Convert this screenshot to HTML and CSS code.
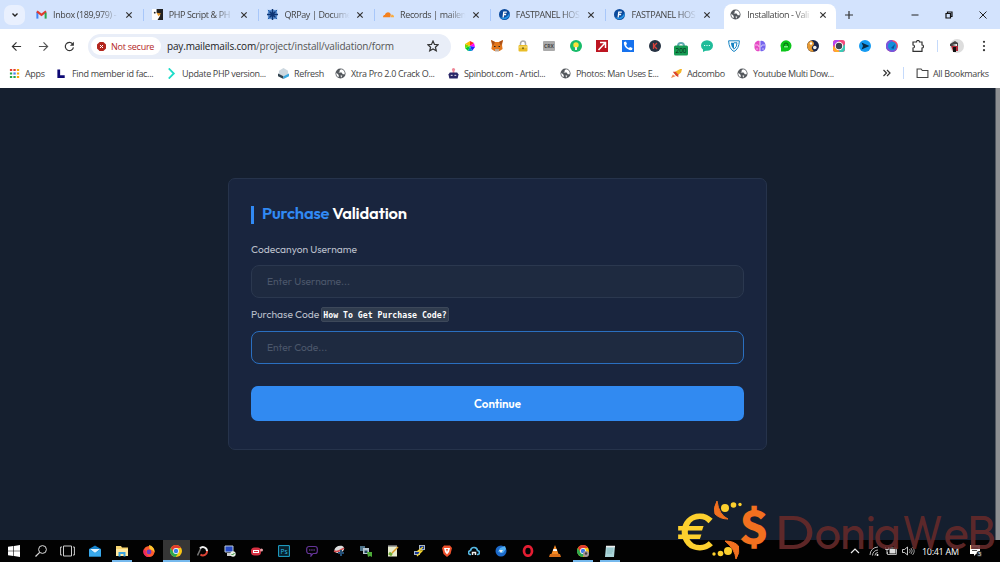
FILE: index.html
```html
<!DOCTYPE html>
<html lang="en">
<head>
    <meta charset="UTF-8">
    <meta name="viewport" content="width=device-width, initial-scale=1.0">
    <title>Installation - Validation</title>
    <link rel="stylesheet" href="styles.css">
</head>
<body>
    <!-- Shared icons -->
    <svg class="defs" width="0" height="0">
        <symbol id="close" viewBox="0 0 8 8"><path d="M1.3 1.3l5.4 5.4M6.7 1.3L1.3 6.7" stroke="#333" stroke-width="1.2"/></symbol>
        <symbol id="globe" viewBox="0 0 12 12"><circle cx="6" cy="6" r="5.5" fill="#54585d"/><path d="M1.6 5.2L4 7.6v2.6C2 9.4 1 7.500 1.600 5.200zM6.500 1.400L5 2.800v1.400L3.700 5h3.500l1.300 1.700H10.600C11 4 9.500 1.800 6.500 1.400zM6 8.300h2l-1.300 2.200z" fill="#fff"/></symbol>
        <symbol id="fast" viewBox="0 0 12 12"><circle cx="6" cy="6" r="6" fill="#0b4a9c"/><path d="M1 9A6 6 0 0 0 11.500 4Q8 11 1 9z" fill="#2393e6"/><path d="M4.500 9.300L5.200 3.300H8.500M4.800 6h3" fill="none" stroke="#fff" stroke-width="1.400"/></symbol>
        <symbol id="chrome" viewBox="0 0 12 12"><circle cx="6" cy="6" r="6" fill="#f9c513"/><path d="M.8 3A6 6 0 0 1 11.200 3H6L3.500 7.500z" fill="#e33b2e"/><path d="M.8 3A6 6 0 0 0 5.600 12L8.500 7.400 3.500 7.500z" fill="#2da94f"/><circle cx="6" cy="6" r="2.900" fill="#fff"/><circle cx="6" cy="6" r="2.200" fill="#3b7de8"/></symbol>
    </svg>

    <!-- Tab strip -->
    <div class="tabs">
        <div class="tab-search"><svg width="8" height="6" viewBox="0 0 8 6"><path d="M1.500 1.500L4 4l2.500-2.500" fill="none" stroke="#222" stroke-width="1.400"/></svg></div>
        <div class="tab">
            <svg class="fav" viewBox="0 0 12 12"><path d="M1.500 10.500V3" stroke="#4285f4" stroke-width="2.200"/><path d="M1 2.500l5 4 5-4" fill="none" stroke="#e33b2e" stroke-width="2.400"/><path d="M10.500 4v6.500" stroke="#2da94f" stroke-width="2.200"/></svg>
            <span class="tab-title">Inbox (189,979) -</span>
            <svg class="x"><use href="#close"/></svg>
        </div>
        <div class="tab">
            <svg class="fav" viewBox="0 0 12 12"><path fill="#fff" d="M0 0h12v12H0z"/><path d="M5 0h7v12H6L9 7 5 4z" fill="#222"/><path d="M5 4l5 1-3 3z" fill="#e99a2d"/><circle cx="3" cy="4" r="1" fill="#222"/></svg>
            <span class="tab-title">PHP Script &amp; PH</span>
            <svg class="x"><use href="#close"/></svg>
        </div>
        <div class="tab">
            <svg class="fav" viewBox="0 0 12 12"><path fill="#5b8fd0" d="M1 1h10v10H1z"/><path d="M6 0v12M0 6h12M3 3l6 6M9 3L3 9" stroke="#0d3474" stroke-width="1.600"/><path d="M1 1l2 2M11 1L9 3M1 11l2-2M11 11L9 9" stroke="#1c56a5"/></svg>
            <span class="tab-title">QRPay | Docume</span>
            <svg class="x"><use href="#close"/></svg>
        </div>
        <div class="tab">
            <svg class="fav" viewBox="0 0 12 12"><path d="M0 9c0-2 1-2.500 2-2.500C3 3 7.500 2.500 8.500 6L8 9z" fill="#f4811f"/><path d="M8.500 9l.7-3c2 0 2.800 1 2.800 3z" fill="#faad3f"/></svg>
            <span class="tab-title">Records | mailen</span>
            <svg class="x"><use href="#close"/></svg>
        </div>
        <div class="tab">
            <svg class="fav"><use href="#fast"/></svg>
            <span class="tab-title">FASTPANEL HOS</span>
            <svg class="x"><use href="#close"/></svg>
        </div>
        <div class="tab tab-last">
            <svg class="fav"><use href="#fast"/></svg>
            <span class="tab-title">FASTPANEL HOS</span>
            <svg class="x"><use href="#close"/></svg>
        </div>
        <div class="tab active">
            <svg class="fav"><use href="#globe"/></svg>
            <span class="tab-title">Installation - Vali</span>
            <svg class="x"><use href="#close"/></svg>
        </div>
        <svg class="new-tab" viewBox="0 0 8 8"><path d="M4 0v8M0 4h8" stroke="#333" stroke-width="1.200"/></svg>
        <div class="window-buttons">
            <svg viewBox="0 0 8 8"><path d="M.5 4h7" stroke="#222"/></svg>
            <svg viewBox="0 0 8 8"><path d="M1 2.500h4.500V7H1zM2.500 2.500V1H7v4.500H5.500" fill="none" stroke="#111" stroke-width="1.200"/></svg>
            <svg viewBox="0 0 8 8"><path d="M.5.5l7 7M7.500.5l-7 7" stroke="#222"/></svg>
        </div>
    </div>

    <!-- Toolbar -->
    <div class="toolbar">
        <div class="nav">
            <svg viewBox="0 0 12 12"><path d="M11 6H2M6 1.500L1.500 6 6 10.500" fill="none" stroke="#333" stroke-width="1.300"/></svg>
            <svg viewBox="0 0 12 12"><path d="M1 6h9M6 1.500L10.500 6 6 10.500" fill="none" stroke="#555" stroke-width="1.300"/></svg>
            <svg viewBox="0 0 12 12"><path d="M10.300 7A4.500 4.500 0 1 1 9.300 3" fill="none" stroke="#333" stroke-width="1.300"/><path d="M10.800.8v4.300H6.500z" fill="#333"/></svg>
        </div>
        <div class="omnibox">
            <div class="chip">
                <svg width="9" height="9" viewBox="0 0 9 9"><path d="M2.600 0h3.800L9 2.600v3.800L6.400 9H2.600L0 6.400V2.600z" fill="#b3261e"/><path d="M3 3l3 3M6 3L3 6" stroke="#fff"/></svg>
                <span>Not secure</span>
            </div>
            <span class="url"><b>pay.mailemails.com</b>/project/install/validation/form</span>
            <svg class="star" viewBox="0 0 12 12"><path d="M6 1l1.500 3.400 3.700.3-2.800 2.500.9 3.600L6 8.900l-3.300 1.900.9-3.600L.8 4.700l3.700-.3z" fill="none" stroke="#333" stroke-width="1.200"/></svg>
        </div>
        <div class="extensions">
            <svg viewBox="0 0 12 12"><path fill="#f22" d="M6 6V1l4 2z"/><path fill="#f0f" d="M6 6l4-3 1 4z"/><path fill="#22f" d="M6 6l5 1-3 4z"/><path fill="#09c" d="M6 6l2 5H4z"/><path fill="#0c3" d="M6 6l-2 5-3-3z"/><path fill="#7d0" d="M6 6L1 8V4z"/><path fill="#fb0" d="M6 6L1 4l5-3z"/></svg>
            <svg viewBox="0 0 12 12"><path d="M0 0l4 2h4l4-2-1 5 .6 4-3 2H3.400l-3-2L1 5z" fill="#e2761b"/><path d="M0 0l4 2-2 4zM12 0L8 2l2 4z" fill="#a9501a"/><path d="M4 9h4v2.500H4z" fill="#c0ad9e"/><path d="M3 6h1.500v1H3zM7.500 6H9v1H7.500z" fill="#222"/></svg>
            <svg viewBox="0 0 12 12"><path d="M3.500 6V3.500a2.500 2.500 0 0 1 5 0V6" fill="none" stroke="#aaa" stroke-width="1.500"/><rect x="1.500" y="5" width="9" height="6.500" rx="1" fill="#e9bd28"/><path d="M2 7h8" stroke="#f9e58b"/><circle cx="6" cy="8.300" r="1" fill="#7a6414"/></svg>
            <svg viewBox="0 0 12 12"><rect y="1" width="12" height="10" rx="1" fill="#aaa"/><text x="6" y="8" font-size="5" font-weight="bold" text-anchor="middle" fill="#444">CRX</text></svg>
            <svg viewBox="0 0 12 12"><circle cx="6" cy="6" r="6" fill="#18bb69"/><circle cx="6" cy="5" r="2.700" fill="#ffe03b"/><path d="M5 7h2v3H5z" fill="#eee"/></svg>
            <svg viewBox="0 0 12 12"><path fill="#bd1521" d="M0 0h12v12H0z"/><path d="M2.500 10L9 3M4 2.500h5.500V8" fill="none" stroke="#fff" stroke-width="1.500"/></svg>
            <svg viewBox="0 0 12 12"><path fill="#1672ee" d="M0 0h12v12H0z"/><path d="M2 2l2-.5L5 4 4 5c.5 1.500 1.500 2.500 3 3l1-1 2.500 1L10 10C6 11 1 6 2 2z" fill="#fff"/></svg>
            <svg viewBox="0 0 12 12"><circle cx="6" cy="6" r="6" fill="#263343"/><path d="M4.500 3v6M8 3L5 6l3 3" fill="none" stroke="#d8423c" stroke-width="1.300"/></svg>
            <svg class="badged" viewBox="0 0 16 16"><path d="M5 6a3 3 0 0 1 6 0" fill="none" stroke="#5faab0" stroke-width="2"/><rect x="1" y="5.500" width="14" height="10" rx="1.500" fill="#169b54"/><text x="8" y="13" font-size="6.500" text-anchor="middle" fill="#062b15">200</text></svg>
            <svg viewBox="0 0 12 12"><ellipse cx="6" cy="5.500" rx="6" ry="5.300" fill="#20bc9a"/><path d="M2 8v4l4-2z" fill="#20bc9a"/><path d="M3 5.500h6" stroke="#d7fff4" stroke-dasharray="1.200"/></svg>
            <svg viewBox="0 0 12 12"><path d="M.6.800h10.800Q11 9 6 11.500 1 9 .6.800z" fill="#fff" stroke="#1683c2"/><path d="M3 2.800h3v6.500Q3 7 3 2.800z" fill="#1683c2"/><path d="M6 2.800h3Q9 7 6 9.300" fill="none" stroke="#1683c2"/></svg>
            <svg viewBox="0 0 12 12"><path d="M5.600 1v10C3 12 0 10 .5 6 0 3 3 0 5.600 1z" fill="#e64bc5"/><path d="M6.400 1v10C9 12 12 10 11.500 6 12 3 9 0 6.400 1z" fill="#7765ee"/><path d="M1 5h3l1 2M11 5H8L7 7M3 8v2M9 8v2" fill="none" stroke="#fff" stroke-width=".6"/></svg>
            <svg viewBox="0 0 12 12"><circle cx="6" cy="5.800" r="5.500" fill="#0cc51b"/><path d="M1 7v4.500h5z" fill="#0cc51b"/><path d="M4 7.500V5.200a2 2 0 0 1 4 0v2.300" fill="none" stroke="#087713" stroke-width="1.200"/><path d="M4 6h4v1.500H4z" fill="#7be884"/></svg>
            <svg viewBox="0 0 12 12"><circle cx="6" cy="6" r="6" fill="#192548"/><path d="M3 1a3 3 0 0 1 4 3c0 2-3 2-2 5l2 2.500A5.700 5.700 0 0 1 3 1z" fill="#e79a33"/><circle cx="7.800" cy="7.500" r="1.800" fill="#eee"/><circle cx="4" cy="3.500" r="1.200" fill="#fff"/></svg>
            <svg viewBox="0 0 12 12"><rect width="12" height="12" rx="2.500" fill="#f34b7d"/><path d="M0 6V2L2 0h5z" fill="#b447f2"/><path d="M5 12h5l2-2V4z" fill="#3dc9b5"/><path d="M0 6v4l2 2h5z" fill="#ffad27"/><circle cx="6" cy="6" r="4.200" fill="#fff"/><circle cx="6" cy="6" r="3.200" fill="#3c4652"/></svg>
            <svg viewBox="0 0 12 12"><circle cx="6" cy="6" r="6" fill="#159bf2"/><path d="M2.500 2.500L10.500 6l-8 3.500L4 6z" fill="#082b45"/></svg>
            <svg viewBox="0 0 12 12"><circle cx="6" cy="6" r="6" fill="#ef496c"/><path d="M6 0a6 6 0 1 0 5 9z" fill="#7957dc"/><circle cx="6.300" cy="6" r="4.300" fill="#148fd9"/><path d="M5 8l4-4-1.500 5z" fill="#0b4d9b"/></svg>
            <svg viewBox="0 0 12 12"><path d="M1 2h3.500a1.500 1.500 0 0 1 3 0H10v3a1.500 1.500 0 0 1 0 3v3.300H1V8a1.500 1.500 0 0 0 0-3z" fill="none" stroke="#333" stroke-width="1.200"/></svg>
        </div>
        <i class="divider"></i>
        <svg class="avatar" viewBox="0 0 14 14"><circle cx="7" cy="7" r="7" fill="#ddd"/><path d="M0 5l5-3 3 2v3H0z" fill="#444"/><path d="M2 6l5-1v2z" fill="#fff"/><path d="M1 7h7v5H3z" fill="#b32836"/><path d="M3 8h3v5H3z" fill="#111"/></svg>
        <svg class="dots" viewBox="0 0 4 12"><circle cx="2" cy="1.800" r="1.100"/><circle cx="2" cy="6" r="1.100"/><circle cx="2" cy="10.200" r="1.100"/></svg>
    </div>

    <!-- Bookmarks -->
    <div class="bookmarks">
        <div class="bookmark bm-apps">
            <svg viewBox="0 0 12 12"><path d="M1 2.200h2.500M4.800 2.200h2.500" stroke="#e33b2e" stroke-width="2.400"/><path d="M8.600 2.200h2.500M8.600 6h2.500M8.600 9.800h2.500" stroke="#f6a80b" stroke-width="2.400"/><path d="M1 6h2.500M1 9.800h2.500M4.800 9.800h2.500" stroke="#27a34a" stroke-width="2.400"/><path d="M4.800 6h2.500" stroke="#4285f4" stroke-width="2.400"/></svg>
            <span>Apps</span>
        </div>
        <div class="bookmark bm-member">
            <svg viewBox="0 0 12 12"><path d="M3 1.500v8h6.500" fill="none" stroke="#0d0874" stroke-width="3"/></svg>
            <span>Find member id fac...</span>
        </div>
        <div class="bookmark bm-php">
            <svg viewBox="0 0 12 12"><path d="M3 .5L8.500 6 3 11.500" fill="none" stroke="#1ddcc8" stroke-width="2"/></svg>
            <span>Update PHP version...</span>
        </div>
        <div class="bookmark bm-refresh">
            <svg viewBox="0 0 12 12"><path d="M1 3l5-3 5 3v4L6 9 1 7z" fill="#ccd7df"/><path d="M0 6l6 3v3L0 9z" fill="#31424e"/><path d="M6 9l6-3v3l-6 3z" fill="#3aa7df"/></svg>
            <span>Refresh</span>
        </div>
        <div class="bookmark bm-xtra">
            <svg><use href="#globe"/></svg>
            <span>Xtra Pro 2.0 Crack O...</span>
        </div>
        <div class="bookmark bm-spin">
            <svg viewBox="0 0 12 12"><circle cx="6" cy="1.700" r="1.700" fill="#ef8998"/><path d="M5 2h2v4H5z" fill="#ef8998"/><path d="M2 5h8l1.500 2-1 4.500h-9L.5 7z" fill="#292667"/><path d="M3 8h2M7 8h2" stroke="#fff"/></svg>
            <span>Spinbot.com - Articl...</span>
        </div>
        <div class="bookmark bm-photos">
            <svg><use href="#globe"/></svg>
            <span>Photos: Man Uses E...</span>
        </div>
        <div class="bookmark bm-adcombo">
            <svg viewBox="0 0 12 12"><path d="M3 5L10 1l2 0-1 4-5 4z" fill="#f5b52a"/><path d="M2 4h3l3 3v3L5 8z" fill="#d94332"/><path d="M0 11l2-4 3 2z" fill="#f08b54"/></svg>
            <span>Adcombo</span>
        </div>
        <div class="bookmark bm-youtube">
            <svg><use href="#globe"/></svg>
            <span>Youtube Multi Dow...</span>
        </div>
        <svg class="more" viewBox="0 0 8 8"><path d="M1 1l3 3-3 3M4.500 1l3 3-3 3" fill="none" stroke="#333" stroke-width="1.200"/></svg>
        <i class="divider"></i>
        <div class="bookmark bm-all">
            <svg viewBox="0 0 12 12"><path d="M.6 2h4l1.200 1.500h5.600v7H.6z" fill="none" stroke="#444" stroke-width="1.100"/></svg>
            <span>All Bookmarks</span>
        </div>
    </div>

    <!-- Page -->
    <main class="page">
        <form class="card">
            <h3 class="title"><span>Purchase</span> Validation</h3>
            <label for="username">Codecanyon Username</label>
            <input type="text" id="username" placeholder="Enter Username...">
            <label for="code">Purchase Code <code>How To Get Purchase Code?</code></label>
            <input type="text" id="code" class="focused" placeholder="Enter Code...">
            <button type="submit">Continue</button>
        </form>
        <div class="scrollbar"></div>
    </main>

    <!-- Taskbar -->
    <div class="taskbar">
        <div class="task"><svg viewBox="0 0 12 12"><path d="M0 1.700L5.400 1v4.700H0zM6 .9L12 0v5.700H6zM0 6.300h5.400V11L0 10.300zM6 6.300h6V12l-6-.9z" fill="#fff"/></svg></div>
        <div class="task"><svg viewBox="0 0 12 12"><circle cx="7.500" cy="4.500" r="3.900" fill="none" stroke="#ddd"/><path d="M4.700 7.300L.5 11.500" stroke="#ddd" stroke-width="1.200"/></svg></div>
        <div class="task"><svg class="wide" viewBox="0 0 15 12"><path d="M3.500 1h8v10h-8zM2 2H.6v8H2M13 2h1.400v8H13" fill="none" stroke="#ccc"/></svg></div>
        <div class="task"><svg viewBox="0 0 12 12"><path d="M0 4l6-3.500L12 4v7.500H0z" fill="#1682cc"/><path d="M1 4h10L6 8z" fill="#dff3ff"/><path d="M0 4l6 4 6-4v7.500H0z" fill="#39a9ec"/></svg></div>
        <div class="task open"><svg viewBox="0 0 12 12"><path d="M0 1h5l1 1.500h6V11H0z" fill="#f6d471"/><path d="M0 4h12v7H0z" fill="#ffe9a0"/><path d="M2.500 11.500V7h7v4.500H7.500V9h-3v2.500z" fill="#39a2df"/></svg></div>
        <div class="task"><svg viewBox="0 0 12 12"><circle cx="6" cy="6.500" r="5.500" fill="#ff5c2e"/><path d="M6 0c4 1 6 4 5.500 8-1-3-3-3-5-4z" fill="#ffc52e"/><path d="M1 4a5.500 5.500 0 0 0 6 8C3 10 3 8 3 6z" fill="#f2285d"/><circle cx="6" cy="7" r="2.400" fill="#6b3dc8"/></svg></div>
        <div class="task open current"><svg><use href="#chrome"/></svg></div>
        <div class="task"><svg viewBox="0 0 12 12"><path d="M3 3.500A4 4 0 0 1 10 6" fill="none" stroke="#eee" stroke-width="2"/><path d="M10 6A4 4 0 0 1 3.500 9.500" fill="none" stroke="#db4335" stroke-width="2"/><path d="M.5 10.500L3.500 4" stroke="#777" stroke-width="1.500"/></svg></div>
        <div class="task"><svg viewBox="0 0 12 12"><path d="M1 1h8v6H1z" fill="#2549c5" stroke="#b9c9dd"/><path d="M3 8h5v3H3z" fill="#ccc"/><circle cx="9" cy="9" r="2.700" fill="#e8efe6"/><path d="M7.500 9l1 1 2-2" fill="none" stroke="#268b2c"/></svg></div>
        <div class="task"><svg viewBox="0 0 12 12"><rect y="2.500" width="10" height="8" rx="3.500" fill="#d73042"/><path d="M2 5h6v3H2z" fill="#fff"/><path d="M3 6.500h4" stroke="#d73042"/><circle cx="10.500" cy="5" r="1.500" fill="#e8a1a6"/></svg></div>
        <div class="task"><svg viewBox="0 0 12 12"><path d="M.6.600h10.800v10.800H.6z" fill="#06202c" stroke="#20a7cf"/><text x="6" y="8.500" font-size="6.500" text-anchor="middle" fill="#32bde6">Ps</text></svg></div>
        <div class="task"><svg viewBox="0 0 12 12"><path d="M3 1.500h6a2.300 2.300 0 0 1 2.300 2.300v2.400A2.300 2.300 0 0 1 9 8.500H7L5 11V8.500H3A2.300 2.300 0 0 1 .7 6.200V3.800A2.300 2.300 0 0 1 3 1.500z" fill="none" stroke="#643498" stroke-width="1.200"/><path d="M3 5h6" stroke="#784aae" stroke-dasharray="1.500 .7"/></svg></div>
        <div class="task"><svg viewBox="0 0 12 12"><ellipse cx="6.500" cy="4.500" rx="5" ry="3.500" fill="#ddd" transform="rotate(-20 6 5)"/><path d="M1 6c4 2 7-1 10-3" stroke="#d44d50" stroke-width="1.500" fill="none"/><path d="M8 5v6M5 8h6" stroke="#234e75" stroke-width="2"/></svg></div>
        <div class="task"><svg viewBox="0 0 12 12"><path d="M0 1h5v5H0z" fill="#4f738a"/><path d="M3 3h6v6H3z" fill="#b7c7d2"/><path d="M4.500 5.500h3V8h-3z" fill="#24435a"/><path d="M7 7l5 0 0 5-2-1-2 1z" fill="#4daa39"/></svg></div>
        <div class="task"><svg viewBox="0 0 12 12"><path d="M1 1h9v10.500H1z" fill="#e9edcf"/><path d="M1 1h9" stroke="#888" stroke-width="1.500"/><path d="M2 8l3 2" stroke="#70ac35" stroke-width="3"/><path d="M5 8l6-6" stroke="#dc9b25" stroke-width="1.500"/></svg></div>
        <div class="task"><svg viewBox="0 0 12 12"><path d="M5 0h6v5H5zM0 6h6v4H0z" fill="#a8b6c5"/><path d="M6 1h4v3H6zM1 7h4v2H1z" fill="#173798"/><path d="M9 2L4 6h4l-5 5" fill="none" stroke="#f4d530" stroke-width="1.300"/></svg></div>
        <div class="task"><svg viewBox="0 0 12 12"><path d="M3 .5h6L11 3 9.500 9 6 12 2.500 9 1 3z" fill="#ef512c"/><path d="M3 3h6L8 7 6 9.500 4 7z" fill="#fff"/><path d="M5 4h2L6 7z" fill="#ef512c"/></svg></div>
        <div class="task"><svg viewBox="0 0 12 12"><path d="M3 9.500H2C0 9 0 6 2.500 5.500 3.500 1 9 2 9.500 5.500 12 6 12 9 10 9.500H9" fill="none" stroke="#55b7e2" stroke-width="1.700"/><path d="M4.500 10V7.500h3V10" fill="none" stroke="#eee" stroke-width="1.500"/></svg></div>
        <div class="task"><svg viewBox="0 0 12 12"><circle cx="6" cy="6" r="5.500" fill="#1c69c9"/><path d="M5 3l5-2 1 3-3 4-5-1z" fill="#51aff4"/><path d="M4 5l4 0-2 3z" fill="#eee"/></svg></div>
        <div class="task"><svg viewBox="0 0 12 12"><ellipse cx="6" cy="6" rx="4" ry="4.700" fill="none" stroke="#e41d32" stroke-width="2.700"/></svg></div>
        <div class="task"><svg viewBox="0 0 12 12"><path d="M6 0l4 10H2z" fill="#f48a25"/><path d="M4.500 4h3l.7 2H3.800z" fill="#fff"/><path d="M1 9h10l1 3H0z" fill="#d96e18"/></svg></div>
        <div class="task open"><svg viewBox="0 0 12 12"><use href="#chrome"/><circle cx="9" cy="9" r="3" fill="#a99"/><circle cx="9" cy="8.500" r="1.200" fill="#444"/></svg></div>
        <div class="task open"><svg viewBox="0 0 12 12"><path d="M2 1h9l-1 11H1z" fill="#acd5d9"/><path d="M2 1.500h9" stroke="#eee" stroke-width="1.500"/><path d="M3 4h6M3 6h6M3 8h5" stroke="#72adb4" stroke-width=".6"/></svg></div>
        <div class="tray">
            <svg class="tray-up" viewBox="0 0 10 10"><path d="M1 7l4-4 4 4" fill="none" stroke="#eee" stroke-width="1.200"/></svg>
            <svg class="tray-wifi" viewBox="0 0 10 10"><path d="M1 9a8 8 0 0 1 8-8M3.500 9.500A5.500 5.500 0 0 1 9 4M6 9.500a3 3 0 0 1 3-3" fill="none" stroke="#bbb" stroke-width="1"/><circle cx="8.500" cy="9" r="1" fill="#fff"/></svg>
            <svg class="tray-battery" viewBox="0 0 12 10"><path d="M4.500 3h6v4.500h-6z" fill="#ddd"/><path d="M4 2h7.400v6.500H2.500V6M11.900 4v2.500" fill="none" stroke="#ddd" stroke-width=".8"/><path d="M.5 1v2.500h3V1M2 3.500V8" fill="none" stroke="#ccc"/></svg>
            <svg class="tray-volume" viewBox="0 0 13 10"><path d="M.5 3.500h2L5.500 1v8L2.500 6.500h-2z" fill="none" stroke="#ddd" stroke-width=".9"/><path d="M7.500 3q1.500 2 0 4M9 2q2.500 3 0 6M10.500 1q3.500 4 0 8" fill="none" stroke="#bbb" stroke-width=".8"/></svg>
            <span class="clock">10:41 AM</span>
            <svg class="tray-note" viewBox="0 0 12 12"><path d="M0 0h10v9H6l-2 2V9H0z" fill="#fff"/><path d="M2 3h6M2 5.500h5" stroke="#222" stroke-width=".8"/><circle cx="9.500" cy="9" r="3" fill="#222"/><text x="9.500" y="11.300" font-size="6" text-anchor="middle" fill="#fff">3</text></svg>
        </div>
    </div>

    <!-- Watermark over page and taskbar -->
    <svg class="watermark" viewBox="0 0 325 64">
        <text class="euro" x="2" y="52" textLength="38" lengthAdjust="spacingAndGlyphs">€</text>
        <text class="dollar" x="64" y="46" textLength="29" lengthAdjust="spacingAndGlyphs">$</text>
        <path d="M42 3Q38 10 40 16 45 21 53 21 44 17 42 3zM50 43Q59 43 63.500 48 65 55 61 61 60 51 50 43z" fill="#f2701f" stroke="#f2701f"/>
        <g fill="#fdd02e"><circle cx="50" cy="10" r="4"/><circle cx="58.500" cy="7" r="2.800"/><circle cx="65" cy="6.500" r="1.700"/><circle cx="53" cy="53" r="4"/><circle cx="45.500" cy="55.500" r="2.800"/><circle cx="39" cy="56" r="1.700"/></g>
        <text class="brand" y="51"><tspan x="100" textLength="40" lengthAdjust="spacingAndGlyphs">D</tspan><tspan x="139.500 165 190.500 198.500">onia</tspan><tspan x="227.500" textLength="40" lengthAdjust="spacingAndGlyphs">W</tspan><tspan x="268.500">e</tspan><tspan x="292" textLength="29" lengthAdjust="spacingAndGlyphs">B</tspan></text>
    </svg>
</body>
</html>
```
FILE: styles.css
```css
* {
    box-sizing: border-box;
}
body {
    margin: 0;
    width: 1000px;
    height: 562px;
    overflow: hidden;
    display: flex;
    flex-direction: column;
    background: #151f2f;
    font-family: "Open Sans", "Noto Sans", sans-serif;
    font-size: 9px;
    color: #444;
}
svg {
    flex: none;
}
.defs {
    position: absolute;
}

/* Tab strip */
.tabs {
    height: 29px;
    flex: none;
    display: flex;
    align-items: center;
    background: #d3e3fd;
    padding-left: 4px;
}
.tab-search {
    width: 21px;
    height: 20px;
    margin-right: 3px;
    border-radius: 7px;
    background: #e9f0fe;
    display: flex;
    align-items: center;
    justify-content: center;
}
.tab {
    width: 115.700px;
    height: 29px;
    flex: none;
    display: flex;
    align-items: center;
    padding-left: 8px;
}
.tab:not(.active):not(.tab-last)::after {
    content: "";
    width: 1px;
    height: 12px;
    margin-left: 10px;
    background: #a8c7fa;
}
.fav {
    width: 11px;
    height: 11px;
}
.tab-title {
    width: 67px;
    margin: 0 5px 0 6px;
    overflow: hidden;
    white-space: nowrap;
    letter-spacing: -0.380px;
    -webkit-mask-image: linear-gradient(90deg, #000 70%, transparent 98%);
    mask-image: linear-gradient(90deg, #000 70%, transparent 98%);
}
.x {
    width: 8px;
    height: 8px;
}
.tab.active {
    width: 112px;
    height: 25px;
    margin-left: 2px;
    margin-top: 4px;
    padding-bottom: 4px;
    padding-left: 6px;
    background: #fff;
    border-radius: 8px 8px 0 0;
}
.new-tab {
    width: 8px;
    height: 8px;
    margin-left: 9px;
}
.window-buttons {
    display: flex;
    gap: 26px;
    margin-left: auto;
    padding-right: 13px;
}
.window-buttons svg {
    width: 8px;
    height: 8px;
}

/* Toolbar */
.toolbar {
    height: 34px;
    flex: none;
    display: flex;
    align-items: center;
    background: #fff;
    padding-left: 11px;
}
.nav {
    width: 77px;
    display: flex;
    gap: 15.500px;
}
.nav svg {
    width: 11px;
    height: 11px;
}
.omnibox {
    width: 363px;
    height: 25px;
    display: flex;
    align-items: center;
    padding: 0 12px 0 3px;
    background: #e9eef8;
    border-radius: 13px;
}
.chip {
    width: 70px;
    height: 18px;
    display: flex;
    align-items: center;
    gap: 5px;
    padding-left: 6px;
    border-radius: 9px;
    background: #fff;
    color: #b3261e;
    letter-spacing: -0.250px;
    white-space: nowrap;
}
.url {
    margin-left: 6px;
    font-size: 10px;
    letter-spacing: -0.170px;
    white-space: nowrap;
    color: #555;
}
.url b {
    font-weight: normal;
    color: #222;
}
.star {
    width: 12px;
    height: 12px;
    margin-left: auto;
}
.extensions {
    display: flex;
    align-items: center;
    margin-left: 6px;
}
.extensions svg {
    width: 12px;
    height: 12px;
    margin: 0 7.180px;
}
.extensions .badged {
    width: 16px;
    height: 16px;
    margin: 3px 5.180px 0;
}
.divider {
    width: 1px;
    height: 12px;
    background: #c5dafb;
}
.toolbar .divider {
    margin-left: 6px;
}
.avatar {
    width: 14px;
    height: 14px;
    margin-left: 12px;
}
.dots {
    width: 4px;
    height: 12px;
    margin-left: 18px;
    fill: #333;
}

/* Bookmarks */
.bookmarks {
    height: 25px;
    flex: none;
    display: flex;
    align-items: center;
    background: #fff;
    padding: 0 0 5px 9px;
}
.bookmark {
    flex: none;
    display: flex;
    align-items: center;
    gap: 5px;
    white-space: nowrap;
    letter-spacing: -0.330px;
}
.bookmark svg {
    width: 11px;
    height: 11px;
}
.bm-apps { width: 47px; }
.bm-member { width: 110px; }
.bm-php { width: 112px; }
.bm-refresh { width: 57px; }
.bm-xtra { width: 113px; }
.bm-spin { width: 112px; }
.bm-photos { width: 111px; }
.bm-adcombo { width: 66px; }
.bm-youtube { width: 145px; }
.bm-all { gap: 4px; }
.bm-all svg { width: 13px; height: 12px; }
.more {
    width: 9px;
    height: 8px;
    margin-right: 12px;
}
.bookmarks .divider {
    margin-right: 12px;
}

/* Page */
.page {
    position: relative;
    height: 452px;
    flex: none;
    padding: 90px 0 0 228px;
    background: #151f2f;
    font-family: Outfit, Lato, sans-serif;
}
.card {
    width: 539px;
    height: 272px;
    padding: 27px 22px 0 22px;
    border: 1px solid #26334b;
    border-radius: 7px;
    background: #19253e;
}
.title {
    height: 18px;
    margin: 0 0 18px;
    padding-left: 8px;
    border-left: 3px solid #318af4;
    font-size: 16.500px;
    line-height: 14px;
    font-weight: 600;
    letter-spacing: -0.200px;
    color: #fff;
}
.title span {
    color: #318af4;
}
label {
    display: block;
    height: 15px;
    font-size: 10.250px;
    line-height: 15px;
    color: #b7bdc8;
}
code {
    display: inline-block;
    height: 15px;
    padding: 0 1px;
    border: 1px solid #3d485a;
    border-radius: 2px;
    background: #303c4e;
    font-family: "DejaVu Sans Mono", monospace;
    font-size: 8.200px;
    font-weight: bold;
    line-height: 14px;
    vertical-align: top;
    color: #fff;
}
input {
    display: block;
    width: 100%;
    height: 33px;
    margin: 8px 0 9px;
    padding: 0 15px;
    border: 1px solid #2b384f;
    border-radius: 8px;
    outline: none;
    background: #1e2a40;
    font-family: inherit;
    font-size: 10.250px;
    color: #fff;
}
input::placeholder {
    color: #4b566a;
}
input.focused {
    margin-top: 9px;
    border-color: #2a6fc0;
}
button {
    width: 100%;
    height: 35px;
    margin-top: 13px;
    padding: 0;
    border: none;
    border-radius: 7px;
    background: #318af1;
    font-family: inherit;
    font-size: 11.500px;
    font-weight: 600;
    color: #fff;
}
.scrollbar {
    position: absolute;
    top: 0;
    right: 0;
    width: 5px;
    height: 452px;
    border-left: 1px solid #50565f;
    background: #8d8f92;
}

/* Taskbar */
.taskbar {
    height: 22px;
    flex: none;
    display: flex;
    background: #020202;
}
.task {
    width: 27.100px;
    height: 22px;
    flex: none;
    display: flex;
    align-items: center;
    justify-content: center;
}
.task svg {
    width: 12px;
    height: 12px;
}
.task .wide {
    width: 15px;
}
.task.open {
    background: linear-gradient(#76b9ed, #76b9ed) center bottom / 20px 2px no-repeat;
}
.task.current {
    background: linear-gradient(#76b9ed, #76b9ed) center bottom / 27px 2px no-repeat #363636;
}
.tray {
    display: flex;
    align-items: center;
    margin-left: auto;
    padding-right: 18px;
    color: #fff;
}
.tray svg {
    height: 10px;
}
.tray-up { width: 10px; margin-right: 9px; }
.tray-wifi { width: 10px; margin-right: 6px; }
.tray-battery { width: 12px; margin-right: 5px; }
.tray-volume { width: 13px; margin-right: 7px; }
.clock {
    width: 36px;
    font-size: 9px;
    letter-spacing: -0.300px;
    white-space: nowrap;
}
.tray .tray-note { width: 12px; height: 12px; margin-left: 12px; }

/* Watermark */
.watermark {
    position: absolute;
    left: 675px;
    top: 498px;
    width: 325px;
    height: 64px;
    font-family: Outfit, Lato, sans-serif;
}
.euro {
    font-size: 50px;
    font-weight: 500;
    fill: #fdd02e;
}
.dollar {
    font-size: 47px;
    font-weight: 700;
    fill: #f2701f;
}
.brand {
    font-size: 47px;
    font-weight: 400;
    fill: #672a2a;
    fill-opacity: 0.9;
}
```
